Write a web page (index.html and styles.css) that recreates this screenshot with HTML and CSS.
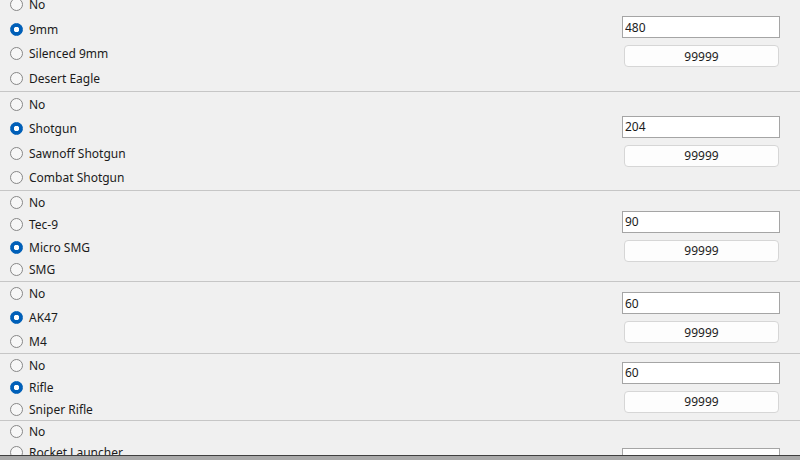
FILE: index.html
```html
<!DOCTYPE html>
<html lang="en">
<head>
    <meta charset="UTF-8">
    <title>Weapons</title>
    <link rel="stylesheet" href="styles.css">
</head>
<body>
    <div class="panel">
        <div class="slot slot-handgun">
            <div class="options">
                <label class="opt"><input type="radio" name="handgun"> No</label>
                <label class="opt"><input type="radio" name="handgun" checked> 9mm</label>
                <label class="opt"><input type="radio" name="handgun"> Silenced 9mm</label>
                <label class="opt"><input type="radio" name="handgun"> Desert Eagle</label>
            </div>
            <div class="values">
                <input class="ammo" type="text" value="480">
                <button class="max">99999</button>
            </div>
        </div>

        <div class="slot slot-shotgun">
            <div class="options">
                <label class="opt"><input type="radio" name="shotgun"> No</label>
                <label class="opt"><input type="radio" name="shotgun" checked> Shotgun</label>
                <label class="opt"><input type="radio" name="shotgun"> Sawnoff Shotgun</label>
                <label class="opt"><input type="radio" name="shotgun"> Combat Shotgun</label>
            </div>
            <div class="values">
                <input class="ammo" type="text" value="204">
                <button class="max">99999</button>
            </div>
        </div>

        <div class="slot slot-smg">
            <div class="options">
                <label class="opt"><input type="radio" name="smg"> No</label>
                <label class="opt"><input type="radio" name="smg"> Tec-9</label>
                <label class="opt"><input type="radio" name="smg" checked> Micro SMG</label>
                <label class="opt"><input type="radio" name="smg"> SMG</label>
            </div>
            <div class="values">
                <input class="ammo" type="text" value="90">
                <button class="max">99999</button>
            </div>
        </div>

        <div class="slot slot-assault">
            <div class="options">
                <label class="opt"><input type="radio" name="assault"> No</label>
                <label class="opt"><input type="radio" name="assault" checked> AK47</label>
                <label class="opt"><input type="radio" name="assault"> M4</label>
            </div>
            <div class="values">
                <input class="ammo" type="text" value="60">
                <button class="max">99999</button>
            </div>
        </div>

        <div class="slot slot-rifle">
            <div class="options">
                <label class="opt"><input type="radio" name="rifle"> No</label>
                <label class="opt"><input type="radio" name="rifle" checked> Rifle</label>
                <label class="opt"><input type="radio" name="rifle"> Sniper Rifle</label>
            </div>
            <div class="values">
                <input class="ammo" type="text" value="60">
                <button class="max">99999</button>
            </div>
        </div>

        <div class="slot slot-heavy">
            <div class="options">
                <label class="opt"><input type="radio" name="heavy"> No</label>
                <label class="opt"><input type="radio" name="heavy"> Rocket Launcher</label>
                <label class="opt"><input type="radio" name="heavy"> Flame Thrower</label>
                <label class="opt"><input type="radio" name="heavy"> Minigun</label>
            </div>
            <div class="values">
                <input class="ammo" type="text" value="">
                <button class="max">99999</button>
            </div>
        </div>
    </div>

    <div class="edge"></div>
</body>
</html>
```

FILE: styles.css
```css
* {
    margin: 0;
    padding: 0;
    box-sizing: border-box;
}
body {
    background: #f0f0f0;
    font-family: "Noto Sans", "Open Sans", sans-serif;
    font-size: 12px;
    color: #1b1b1b;
    overflow: hidden;
}
.panel {
    margin-top: -8px;
}
.slot {
    display: flex;
    align-items: center;
    border-bottom: 1px solid #c6c6c6;
}
.slot-handgun { height: 100px; }
.slot-shotgun { height: 99px; }
.slot-smg { height: 91px; }
.slot-assault { height: 72px; }
.slot-rifle { height: 67px; }
.slot-heavy { height: 105px; }

.options {
    flex: 1;
    align-self: stretch;
    display: flex;
    flex-direction: column;
}
.slot-heavy .opt {
    flex: 0 0 21px;
}
.opt {
    flex: 1;
    display: flex;
    align-items: center;
    gap: 6px;
    padding-left: 10px;
}
.opt input {
    appearance: none;
    width: 13px;
    height: 13px;
    border: 1px solid #878787;
    border-radius: 50%;
    background: #f7f7f7;
    margin: 0;
}
.opt input:checked {
    border-color: #005fb8;
    background: radial-gradient(circle, #fff 0 2.5px, #005fb8 3px);
}

.values {
    width: 158px;
    margin-right: 20px;
    display: flex;
    flex-direction: column;
    gap: 7px;
}
.ammo {
    height: 22px;
    border: 1px solid #a5a5a5;
    background: #fff;
    padding: 0 2px;
    font: inherit;
    color: #1b1b1b;
    outline: none;
}
.max {
    height: 22px;
    margin: 0 1px 0 2px;
    border: 1px solid #d6d6d6;
    border-radius: 4px;
    background: #fdfdfd;
    font: inherit;
    color: #1b1b1b;
}

.edge {
    position: fixed;
    left: 0;
    right: 0;
    bottom: 0;
    height: 5px;
    border-top: 1px solid #3f3f3f;
    background: #a9a9a9;
}
```
